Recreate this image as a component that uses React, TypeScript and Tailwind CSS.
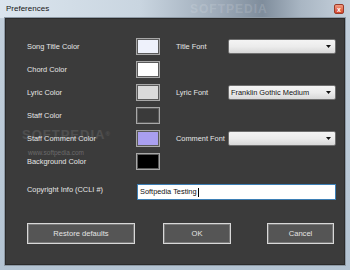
import React from "react";

const Swatch = ({ color }: { color: string }) => (
  <div className="w-[24px] h-[17px] border border-[#a8a8a8] p-[1px] bg-[#5a5a5a] shrink-0">
    <div className="w-full h-full" style={{ backgroundColor: color }} />
  </div>
);

const Combo = ({ value }: { value?: string }) => (
  <div className="w-[108px] h-[15px] border border-[#6f6f6f] rounded-[2px] bg-gradient-to-b from-[#f4f4f4] via-[#ececec] to-[#d8d8d8] flex items-center pl-[2px] pr-[4px] text-[#111] shrink-0">
    <span className="flex-1 text-[7.4px] leading-none whitespace-nowrap">{value}</span>
    <svg width="5" height="3" viewBox="0 0 5 3" className="shrink-0">
      <polygon points="0,0 5,0 2.5,3" fill="#111" />
    </svg>
  </div>
);

const Btn = ({ label, w }: { label: string; w: string }) => (
  <div
    className={`${w} h-[21px] border border-[#d8d8d8] bg-[#555555] shadow-[inset_0_0_0_1px_#7a7a7a] flex items-center justify-center text-[#e4e4e4] text-[7.6px]`}
  >
    {label}
  </div>
);

const rows: { label: string; color: string; right?: { label: string; value?: string } }[] = [
  { label: "Song Title Color", color: "#eef1fb", right: { label: "Title Font" } },
  { label: "Chord Color", color: "#ffffff" },
  { label: "Lyric Color", color: "#dadada", right: { label: "Lyric Font", value: "Franklin Gothic Medium" } },
  { label: "Staff Color", color: "#3a3a3a" },
  { label: "Staff Comment Color", color: "#a99ff0", right: { label: "Comment Font" } },
  { label: "Background Color", color: "#000000" },
];

export default function App() {
  return (
    <div className="w-[350px] h-[270px] flex flex-col font-['Liberation_Sans',Arial,sans-serif] bg-gradient-to-b from-[#c3d0dc] to-[#b4c4d3] overflow-hidden">
      {/* Title bar */}
      <div className="relative h-[18px] shrink-0 flex items-center pl-[6px] bg-[linear-gradient(to_right,#dbe5ee_0%,#c9d5e0_40%,#9eabb9_62%,#7f8d9c_75%,#a9b6c3_86%,#c6d1dc_100%)]">
        <span className="relative text-[8px] text-[#151515] leading-none">Preferences</span>
        <span className="absolute left-[190px] top-[3px] text-[12px] font-bold tracking-[1px] text-white/15 leading-none">SOFTPEDIA</span>
        <div className="absolute right-[6px] top-[4px] w-[10px] h-[10px] rounded-[2px] bg-gradient-to-b from-[#f09a80] to-[#d4442a] border border-[#9a3a28] flex items-center justify-center">
          <span className="text-white text-[7px] font-bold leading-none">x</span>
        </div>
      </div>

      {/* Content wrapper */}
      <div className="flex-1 flex px-[5px] pb-[5px]">
        <div className="relative flex-1 bg-[#3b3b3b] border border-[#2b2b2b] shadow-[0_0_0_1px_#8e9aa6] pl-[21px] pt-[19px] flex flex-col text-[#e6e6e6] text-[7.4px]">
          {/* Watermark */}
          <span className="absolute left-[16px] top-[109px] text-[13px] font-bold tracking-[1px] text-white/10 leading-none pointer-events-none">
            SOFTPEDIA<sup className="text-[6px]">®</sup>
          </span>
          <span className="absolute left-[22px] top-[131px] text-[6.5px] text-white/25 leading-none pointer-events-none">
            www.softpedia.com
          </span>

          <div className="relative flex flex-col gap-[6px]">
            {rows.map((r) => (
              <div key={r.label} className="h-[17px] flex items-center">
                <span className="w-[109px] shrink-0 whitespace-nowrap leading-none">{r.label}</span>
                <Swatch color={r.color} />
                {r.right && (
                  <>
                    <span className="ml-[16px] w-[52px] shrink-0 whitespace-nowrap leading-none">{r.right.label}</span>
                    <Combo value={r.right.value} />
                  </>
                )}
              </div>
            ))}
          </div>

          <div className="mt-[14px] h-[16px] flex items-center">
            <span className="w-[110px] shrink-0 whitespace-nowrap leading-none -mt-[4px]">Copyright Info (CCLI #)</span>
            <div className="w-[199px] h-[16px] bg-white border border-[#3d7fb5] flex items-center pl-[2px] text-[#111] text-[7.4px] leading-none">
              Softpedia Testing<span className="ml-[1px] w-[1px] h-[9px] bg-black inline-block" />
            </div>
          </div>

          <div className="mt-[23px] flex">
            <Btn label="Restore defaults" w="w-[108px]" />
            <div className="ml-[28px]">
              <Btn label="OK" w="w-[68px]" />
            </div>
            <div className="ml-[36px]">
              <Btn label="Cancel" w="w-[67px]" />
            </div>
          </div>
        </div>
      </div>
    </div>
  );
}
